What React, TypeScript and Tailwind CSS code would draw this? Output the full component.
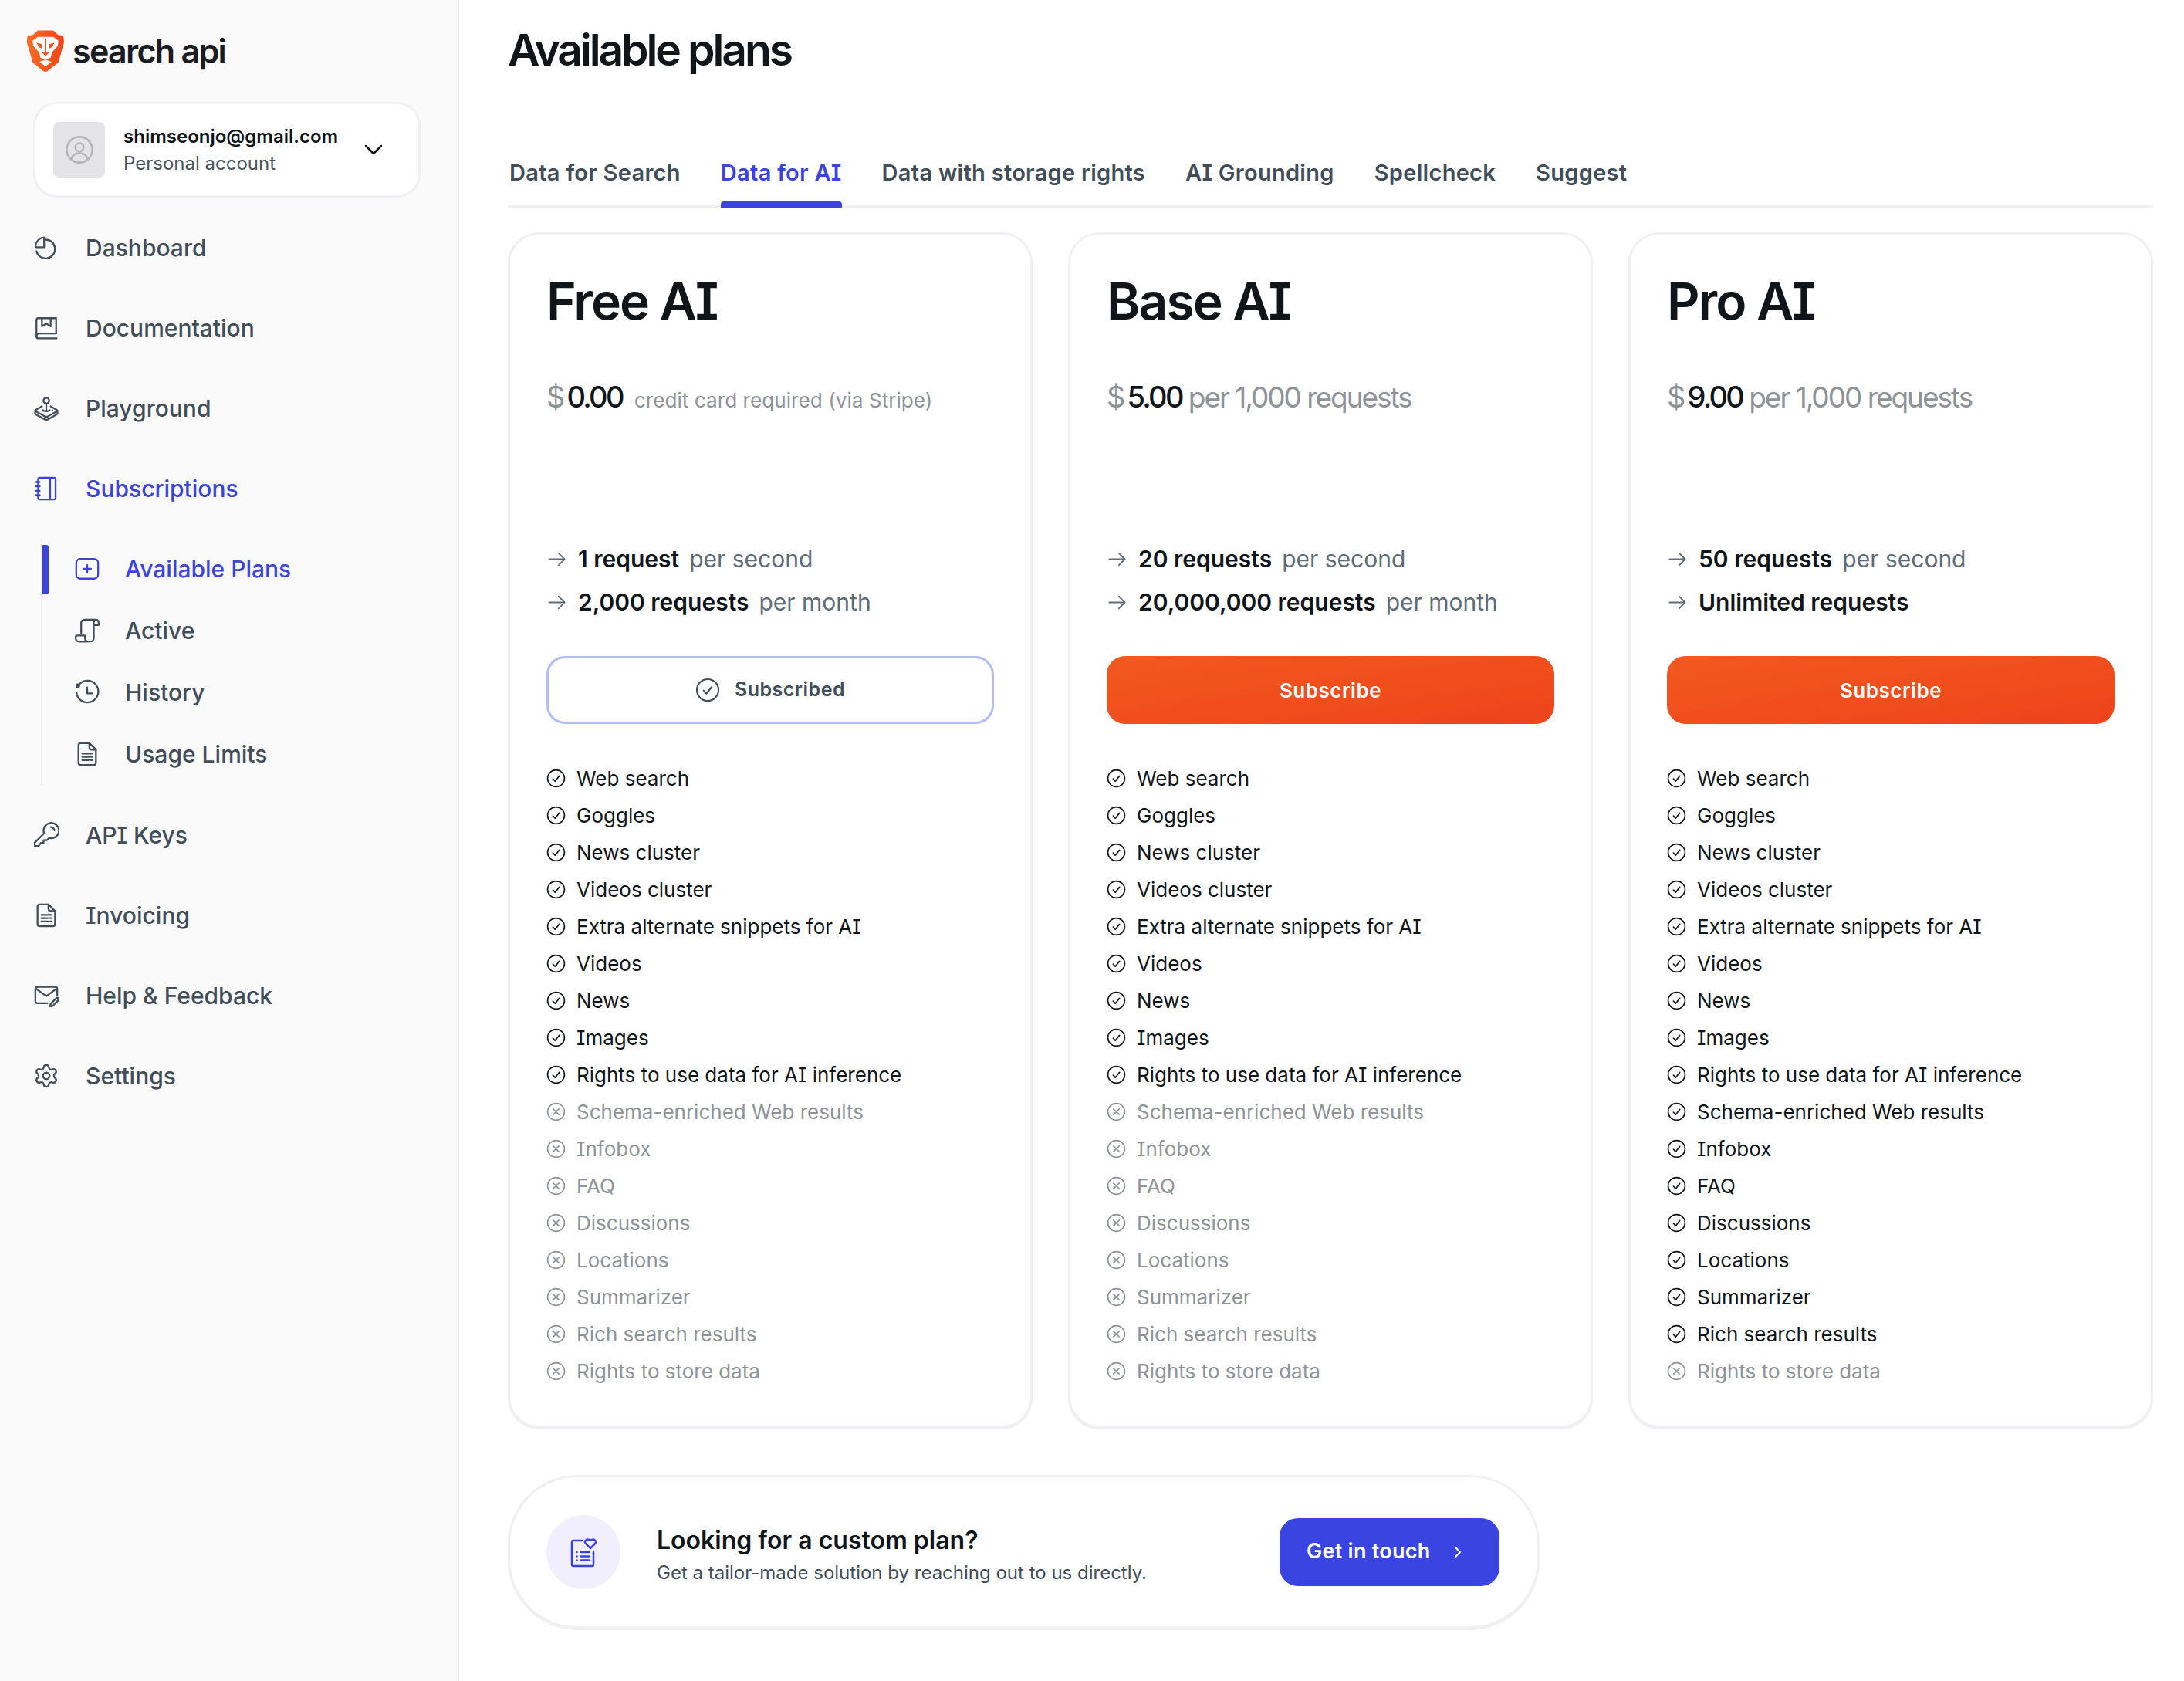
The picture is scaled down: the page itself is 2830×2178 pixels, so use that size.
import React from 'react';
import { ChevronRight, Settings } from 'lucide-react';

const FEATURES = [
  'Web search', 'Goggles', 'News cluster', 'Videos cluster', 'Extra alternate snippets for AI',
  'Videos', 'News', 'Images', 'Rights to use data for AI inference', 'Schema-enriched Web results',
  'Infobox', 'FAQ', 'Discussions', 'Locations', 'Summarizer', 'Rich search results', 'Rights to store data',
];

const PLANS = [
  {
    name: 'Free AI', price: '0.00', note: 'credit card required (via Stripe)', noteSmall: true,
    rate: '1 request', quota: '2,000 requests', quotaNote: 'per month', subscribed: true, included: 9,
  },
  {
    name: 'Base AI', price: '5.00', note: 'per 1,000 requests', noteSmall: false,
    rate: '20 requests', quota: '20,000,000 requests', quotaNote: 'per month', subscribed: false, included: 9,
  },
  {
    name: 'Pro AI', price: '9.00', note: 'per 1,000 requests', noteSmall: false,
    rate: '50 requests', quota: 'Unlimited requests', quotaNote: '', subscribed: false, included: 16,
  },
];

const TABS = ['Data for Search', 'Data for AI', 'Data with storage rights', 'AI Grounding', 'Spellcheck', 'Suggest'];

type IconProps = { className?: string };

function Svg({ className, children }: IconProps & { children: React.ReactNode }) {
  return (
    <svg viewBox="0 0 24 24" fill="none" stroke="currentColor" strokeWidth="1.6" strokeLinecap="round" strokeLinejoin="round" className={className}>
      {children}
    </svg>
  );
}

const PieIcon = ({ className }: IconProps) => (
  <Svg className={className}>
    <path d="M11 4.600a8.600 8.600 0 1 1-8 10.600" />
    <path d="M10 2.500v9H2.200A8.400 8.400 0 0 1 10 2.500Z" />
  </Svg>
);
const BookIcon = ({ className }: IconProps) => (
  <Svg className={className}>
    <path d="M21 17V3H4.500A1.500 1.500 0 0 0 3 4.500v15" />
    <path d="M3 19.500A2.500 2.500 0 0 1 5.500 17H21" />
    <path d="M3 19.500A2 2 0 0 0 5 21.500h16.500" />
    <path d="M8 3v7.500l4-2.500 4 2.500V3" />
  </Svg>
);
const JoystickIcon = ({ className }: IconProps) => (
  <Svg className={className}>
    <circle cx="12" cy="5" r="2.600" />
    <path d="M12 7.600v6.200" />
    <path d="M8 10.200 2.500 13.400c-.8.500-.8 1 0 1.500l8.200 4.600c.8.400 1.800.400 2.600 0l8.200-4.600c.8-.5.8-1 0-1.500L16 10.200" />
    <path d="M1.800 14.200v2.400c0 .5.300.8.700 1l8.200 4.600c.8.400 1.800.400 2.600 0l8.200-4.600c.4-.2.700-.5.700-1v-2.400" />
    <path d="M9 13.600c0 1.400 6 1.400 6 0" />
    <path d="M17.500 13.600h.01" />
  </Svg>
);
const NotebookIcon = ({ className }: IconProps) => (
  <Svg className={className}>
    <rect x="4.500" y="2" width="16" height="20" rx="1.500" />
    <path d="M15.500 2v20" />
    <path d="M2.500 6h3.500M2.500 10h3.500M2.500 14h3.500M2.500 18h3.500" />
  </Svg>
);
const PlusBoxIcon = ({ className }: IconProps) => (
  <Svg className={className}>
    <rect x="2" y="3" width="20" height="18" rx="3.500" />
    <path d="M12 8.500v7M8.500 12h7" />
  </Svg>
);
const ScrollIcon = ({ className }: IconProps) => (
  <Svg className={className}>
    <path d="M6.500 15V5a3 3 0 0 1 3-3h10.500a2.500 2.500 0 0 1 2.500 2.500V7h-4" />
    <path d="M20 2.200a2.500 2.500 0 0 0-2 2.500V19a3 3 0 0 1-3 3H4.500" />
    <path d="M1.500 19a3 3 0 0 0 3 3h8a3 3 0 0 1-2.500-3v-2.500H3a1.500 1.500 0 0 0-1.500 1.500Z" />
  </Svg>
);
const HistoryIcon = ({ className }: IconProps) => (
  <Svg className={className}>
    <path d="M4 5.500A10 10 0 1 1 2.200 12" />
    <circle cx="3.400" cy="6" r="1.300" fill="currentColor" />
    <path d="M12 7.500V13h5" />
  </Svg>
);
const FileLinesIcon = ({ className }: IconProps) => (
  <Svg className={className}>
    <path d="M14 2H6a2 2 0 0 0-2 2v16a2 2 0 0 0 2 2h12a2 2 0 0 0 2-2V8Z" />
    <path d="M14 2v4a2 2 0 0 0 2 2h4" />
    <path d="M7.500 11.500h9M7.500 14.500h6M15.500 14.500h1M7.500 17.500h6M15.500 17.500h1" />
  </Svg>
);
const KeyIcon = ({ className }: IconProps) => (
  <Svg className={className}>
    <path d="M1.500 22v-3.200L10 10.400a7 7 0 1 1 4.600 4.200l-2 2H9.500v2.600H7L5 22Z" />
    <path d="M16 4.600a4 4 0 0 1 3.500 3" />
  </Svg>
);
const MailPenIcon = ({ className }: IconProps) => (
  <Svg className={className}>
    <path d="M13 19H4a2 2 0 0 1-2-2V6a2 2 0 0 1 2-2h16a2 2 0 0 1 2 2v6" />
    <path d="m2.500 5.500 9.500 7 9.500-7" />
    <path d="m21.500 14-5.500 5.500-.6 2.400 2.500-.5 5.300-5.400a1.400 1.400 0 0 0-1.700-2Z" />
  </Svg>
);
const UserIcon = ({ className }: IconProps) => (
  <Svg className={className}>
    <circle cx="12" cy="12" r="10.500" />
    <circle cx="12" cy="10" r="3.400" />
    <path d="M5.500 19.500c.8-3 3.400-4.600 6.500-4.600s5.700 1.600 6.500 4.600" />
  </Svg>
);
const ArrowIcon = ({ className }: IconProps) => (
  <Svg className={className}>
    <path d="M3 12h18M14 5l7 7-7 7" />
  </Svg>
);
const CheckCircle = ({ className }: IconProps) => (
  <Svg className={className}>
    <circle cx="12" cy="12" r="10.500" />
    <path d="m8 12.500 2.800 3L16 9" />
  </Svg>
);
const CrossCircle = ({ className }: IconProps) => (
  <Svg className={className}>
    <circle cx="12" cy="12" r="10.500" />
    <path d="m8.500 8.500 7 7M15.500 8.500l-7 7" />
  </Svg>
);

function Logo() {
  return (
    <svg viewBox="0 0 48 56" className="w-[48px] h-[56px] overflow-visible">
      <defs>
        <linearGradient id="lion" x1="0" y1="0" x2="1" y2="0">
          <stop offset="0" stopColor="#f56d25" />
          <stop offset="1" stopColor="#ec451a" />
        </linearGradient>
      </defs>
      <path d="M14 .5h20l6.700 6 6.300.5 1 8.500-2.300 8.500-5 18-15 11.800h-3.700L7.300 42l-5-18L-.3 15.500.7 7l6.600-.5Z" fill="url(#lion)" />
      <path d="M14 8.800h20l6.700 5-.7 6.700-7.700 8.300-1.600 6.700L24 38.800l-6.700-3.300-1.600-6.700L8 20.500l-.7-6.700Z" fill="#fff" />
      <path d="m12.300 16.200 6.700 2v5.600l-3.300-1.600ZM35.700 16.200l-6.700 2v5.600l3.300-1.600Z" fill="#ef5420" />
      <path d="M23 11h2v18h-2Z" fill="#ef5420" />
      <path d="M19 28.800h10l-5 5Z" fill="#ef5420" />
      <path d="m16 41 8-2.500 8 2.500-8 6Z" fill="#fff" />
    </svg>
  );
}

function NavItem({ icon: Icon, label, active }: { icon: React.ElementType; label: string; active?: boolean }) {
  return (
    <a className={`h-[104px] flex items-center gap-[34px] pl-[43px] text-[30px] font-medium ${active ? 'text-[#3a44dd]' : 'text-[#414d58]'}`}>
      <Icon className="w-[34px] h-[34px] shrink-0" strokeWidth={1.6} />
      <span>{label}</span>
    </a>
  );
}

function SubItem({ icon: Icon, label, active }: { icon: React.ElementType; label: string; active?: boolean }) {
  return (
    <a className={`relative h-[80px] flex items-center gap-[32px] pl-[41px] text-[30px] font-medium ${active ? 'text-[#3a44dd]' : 'text-[#414d58]'}`}>
      {active && <span className="absolute left-0 top-[9px] w-[8px] h-[64px] rounded-r-[3px] bg-[#3a44dd]" />}
      <Icon className="w-[34px] h-[34px] shrink-0" />
      <span>{label}</span>
    </a>
  );
}

function Sidebar() {
  return (
    <aside className="w-[595px] shrink-0 border-r-2 border-[#e7e8ec] bg-[#fafafa] self-stretch">
      <div className="flex gap-[11px] pl-[35px] pt-[39px] h-[132px] items-start">
        <Logo />
        <span className="text-[43px] leading-[54px] font-semibold tracking-[-0.04em] text-[#1b1c22]">search api</span>
      </div>
      <div className="ml-[43px] w-[502px] h-[124px] rounded-[30px] border-[3px] border-[#f0f0f4] bg-white flex items-center pl-[23px]">
        <div className="w-[67px] h-[72px] rounded-[8px] bg-[#e4e4e8] flex items-center justify-center">
          <UserIcon className="w-[38px] h-[38px] text-[#b4b5bb]" />
        </div>
        <div className="ml-[24px] w-[312px]">
          <div className="text-[24px] leading-[35px] font-semibold text-[#10151a]">shimseonjo@gmail.com</div>
          <div className="text-[24px] leading-[35px] text-[#4a5560]">Personal account</div>
        </div>
        <svg viewBox="0 0 24 14" className="w-[24px] h-[14px]" fill="none" stroke="#10151a" strokeWidth="2.500" strokeLinecap="round" strokeLinejoin="round">
          <path d="m2 2 10 10L22 2" />
        </svg>
      </div>
      <nav className="mt-[13px]">
        <NavItem icon={PieIcon} label="Dashboard" />
        <NavItem icon={BookIcon} label="Documentation" />
        <NavItem icon={JoystickIcon} label="Playground" />
        <NavItem icon={NotebookIcon} label="Subscriptions" active />
        <div className="ml-[53px] mt-[12px] mb-[13px] border-l-2 border-[#eeeef2]">
          <SubItem icon={PlusBoxIcon} label="Available Plans" active />
          <SubItem icon={ScrollIcon} label="Active" />
          <SubItem icon={HistoryIcon} label="History" />
          <SubItem icon={FileLinesIcon} label="Usage Limits" />
        </div>
        <NavItem icon={KeyIcon} label="API Keys" />
        <NavItem icon={FileLinesIcon} label="Invoicing" />
        <NavItem icon={MailPenIcon} label="Help & Feedback" />
        <NavItem icon={Settings} label="Settings" />
      </nav>
    </aside>
  );
}

function PlanCard({ plan }: { plan: (typeof PLANS)[number] }) {
  return (
    <div className="rounded-[40px] border-[3px] border-[#f0f0f4] bg-white px-[47px] pt-[46px] h-[1549px] shadow-[0_2px_0_#f0f0f4]">
      <h2 className="text-[66px] leading-[80px] font-semibold tracking-[-0.03em] text-[#10151a]">{plan.name}</h2>
      <div className="mt-[56px] h-[60px] flex items-baseline whitespace-nowrap">
        <span className="text-[38px] text-[#8f9398] mr-[2px]">$</span>
        <span className="text-[38px] font-medium tracking-[-0.07em] text-[#10151a]">{plan.price}</span>
        {plan.noteSmall ? (
          <span className="ml-[15px] text-[26.200px] text-[#8f9398]">{plan.note}</span>
        ) : (
          <span className="ml-[8px] text-[37px] tracking-[-0.055em] text-[#8f9398]">{plan.note}</span>
        )}
      </div>
      <div className="mt-[162px] flex flex-col gap-[24px] text-[30px] leading-[32px]">
        <div className="flex items-center">
          <ArrowIcon className="w-[27px] h-[27px] text-[#5f6b76] mr-[14px]" />
          <span className="font-semibold text-[#10151a]">{plan.rate}</span>
          <span className="ml-[13px] text-[#5f6b76]">per second</span>
        </div>
        <div className="flex items-center">
          <ArrowIcon className="w-[27px] h-[27px] text-[#5f6b76] mr-[14px]" />
          <span className="font-semibold text-[#10151a]">{plan.quota}</span>
          {plan.quotaNote && <span className="ml-[13px] text-[#5f6b76]">{plan.quotaNote}</span>}
        </div>
      </div>
      {plan.subscribed ? (
        <button className="mt-[54px] w-full h-[88px] rounded-[24px] border-[3px] border-[#b4bcf5] bg-white flex items-center justify-center gap-[19px] text-[25px] font-semibold tracking-[0.02em] text-[#414d58]">
          <CheckCircle className="w-[32px] h-[32px]" />
          Subscribed
        </button>
      ) : (
        <button className="mt-[54px] w-full h-[88px] rounded-[24px] bg-gradient-to-br from-[#f2591f] to-[#ee431b] flex items-center justify-center text-[26px] font-semibold tracking-[0.02em] text-white">
          Subscribe
        </button>
      )}
      <ul className="mt-[46px]">
        {FEATURES.map((f, i) => (
          <li key={f} className={`h-[48px] flex items-center gap-[14px] text-[26px] ${i < plan.included ? 'text-[#10151a]' : 'text-[#8f9398]'}`}>
            {i < plan.included ? <CheckCircle className="w-[25px] h-[25px]" /> : <CrossCircle className="w-[25px] h-[25px]" />}
            {f}
          </li>
        ))}
      </ul>
    </div>
  );
}

export default function App() {
  return (
    <div className="flex min-h-[2178px] bg-white font-['Inter',sans-serif] [font-feature-settings:'cv08']">
      <Sidebar />
      <main className="flex-1 pl-[63px] pr-[40px]">
        <h1 className="pt-[30px] text-[57px] leading-[70px] font-semibold tracking-[-0.055em] text-[#10151a]">Available plans</h1>
        <div className="mt-[92px] h-[77px] flex gap-[52px] border-b-[3px] border-[#f0f0f4] pl-[2px]">
          {TABS.map((t) => (
            <a key={t} className={`relative pt-[14px] text-[29px] leading-[36px] font-semibold tracking-[0.01em] whitespace-nowrap ${t === 'Data for AI' ? 'text-[#3a44dd]' : 'text-[#414d58]'}`}>
              {t}
              {t === 'Data for AI' && <span className="absolute left-0 right-0 -bottom-[3px] h-[8px] rounded-t-[4px] bg-[#3a44dd]" />}
            </a>
          ))}
        </div>
        <div className="mt-[32px] grid grid-cols-3 gap-[46px]">
          {PLANS.map((p) => <PlanCard key={p.name} plan={p} />)}
        </div>
        <div className="mt-[61px] w-[1337px] h-[199px] rounded-[90px] border-[3px] border-[#f0f0f4] bg-white shadow-[0_2px_0_#f0f0f4] flex items-center pl-[47px]">
          <div className="w-[96px] h-[96px] rounded-full bg-[#f1effd] flex items-center justify-center">
            <svg viewBox="0 0 44 44" className="w-[44px] h-[44px]" fill="none" stroke="#3a44dd" strokeWidth="2.500" strokeLinecap="round" strokeLinejoin="round">
              <path d="M20 7H9a2 2 0 0 0-2 2v29a2 2 0 0 0 2 2h24a2 2 0 0 0 2-2V21" />
              <path d="m31 17-6-6c-3-3.500 1.500-7.500 6-4 4.500-3.500 9 .5 6 4Z" />
              <path d="M13.500 22h.01M13.500 27.500h.01M13.500 32.500h.01M19 22h11M19 27.500h11M19 32.500h11" />
            </svg>
          </div>
          <div className="ml-[47px] w-[807px] pt-[10px]">
            <div className="text-[32px] leading-[42px] font-semibold text-[#10151a]">Looking for a custom plan?</div>
            <div className="mt-[3px] text-[24px] leading-[36px] text-[#414d58]">Get a tailor-made solution by reaching out to us directly.</div>
          </div>
          <button className="w-[285px] h-[88px] rounded-[24px] bg-[#3a44e0] flex items-center pl-[35px] gap-[23px] text-[27px] font-semibold tracking-[0.01em] text-white">
            Get in touch
            <ChevronRight className="w-[24px] h-[24px]" />
          </button>
        </div>
      </main>
    </div>
  );
}
